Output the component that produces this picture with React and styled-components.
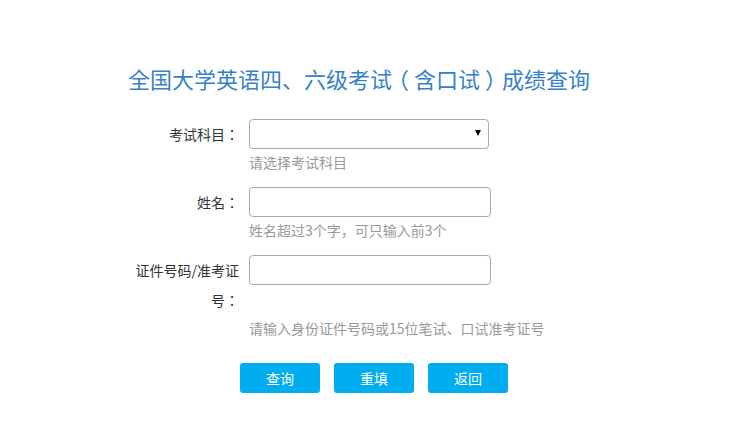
import React, { useState } from 'react'
import styled, { createGlobalStyle } from 'styled-components'

const GlobalStyle = createGlobalStyle`
  html, body {
    margin: 0;
    padding: 0;
    background: #fff;
    font-family: "Microsoft YaHei", "Noto Sans CJK SC", "Noto Sans", sans-serif;
  }
`

const App = () => {
  const [values, setValues] = useState({ subject: '', name: '', ksbh: '' })

  const handleChange = (e) => {
    const { name, value } = e.target
    setValues({ ...values, [name]: value })
  }

  const handleReset = () => {
    setValues({ subject: '', name: '', ksbh: '' })
  }

  return (
    <div>
      <GlobalStyle />
      <Container>
        <Title>
          全国大学英语四、六级考试<Paren side="left">（</Paren>含口试<Paren side="right">）</Paren>成绩查询
        </Title>
        <form onSubmit={(e) => e.preventDefault()}>
          <Field>
            <Label>考试科目：</Label>
            <SelectWrap>
              <Select name="subject" value={values.subject} onChange={handleChange}>
                <option value=""></option>
                <option value="cet4">英语四级</option>
                <option value="cet6">英语六级</option>
              </Select>
              <Arrow />
            </SelectWrap>
          </Field>
          <Hint>请选择考试科目</Hint>

          <Field>
            <Label>姓名：</Label>
            <Input name="name" value={values.name} onChange={handleChange} type="text" />
          </Field>
          <Hint>姓名超过3个字，可只输入前3个</Hint>

          <Field>
            <Label>证件号码/准考证号：</Label>
            <Input name="ksbh" value={values.ksbh} onChange={handleChange} type="text" />
          </Field>
          <Hint>请输入身份证件号码或15位笔试、口试准考证号</Hint>

          <Buttons>
            <Button type="submit">查询</Button>
            <Button type="button" onClick={handleReset}>重填</Button>
            <Button type="button">返回</Button>
          </Buttons>
        </form>
      </Container>
    </div>
  )
}

export default App

const Container = styled.div`
  width: 520px;
  padding: 63px 0 0 128px;
`

const Title = styled.h1`
  margin: 0 0 26px 0;
  font-size: 22px;
  line-height: 30px;
  font-weight: normal;
  color: #3582c8;
  white-space: nowrap;
`

/* half-width paren glyph, padded back to a full cell so the ink sits centred */
const Paren = styled.span`
  font-feature-settings: "halt";
  padding-left: ${(p) => (p.side === 'left' ? '6px' : '5px')};
  padding-right: ${(p) => (p.side === 'left' ? '5px' : '6px')};
`

const Field = styled.div`
  display: flex;
  align-items: flex-start;
`

const Label = styled.label`
  width: 111px;
  flex-shrink: 0;
  text-align: right;
  font-family: "Noto Sans CJK TC", "Noto Sans CJK SC", sans-serif;
  font-size: 14px;
  line-height: 30px;
  color: #333;
  margin-right: 10px;
`

const SelectWrap = styled.div`
  position: relative;
  width: 240px;
  height: 30px;
`

const Select = styled.select`
  appearance: none;
  width: 240px;
  height: 30px;
  box-sizing: border-box;
  border: 1px solid #aaa;
  border-radius: 4px;
  background: #fff;
  padding: 0 24px 0 8px;
  font-size: 14px;
  font-family: inherit;
  outline: none;
`

const Arrow = styled.span`
  position: absolute;
  right: 8px;
  top: 11px;
  width: 0;
  height: 0;
  border-left: 3.5px solid transparent;
  border-right: 3.5px solid transparent;
  border-top: 6px solid #000;
  pointer-events: none;
`

const Input = styled.input`
  width: 242px;
  height: 30px;
  box-sizing: border-box;
  border: 1px solid #aaa;
  border-radius: 4px;
  padding: 0 8px;
  font-size: 14px;
  font-family: inherit;
  outline: none;
`

const Hint = styled.p`
  margin: 3px 0 15px 121px;
  font-size: 14px;
  line-height: 20px;
  color: #999;
`

const Buttons = styled.div`
  display: flex;
  gap: 14px;
  margin: 25px 0 0 112px;
`

const Button = styled.button`
  width: 80px;
  height: 30px;
  border: none;
  border-radius: 3px;
  background-color: #00aeef;
  color: #fff;
  font-size: 14px;
  font-family: inherit;
  cursor: pointer;
  &:hover {
    background-color: #0099d6;
  }
`
